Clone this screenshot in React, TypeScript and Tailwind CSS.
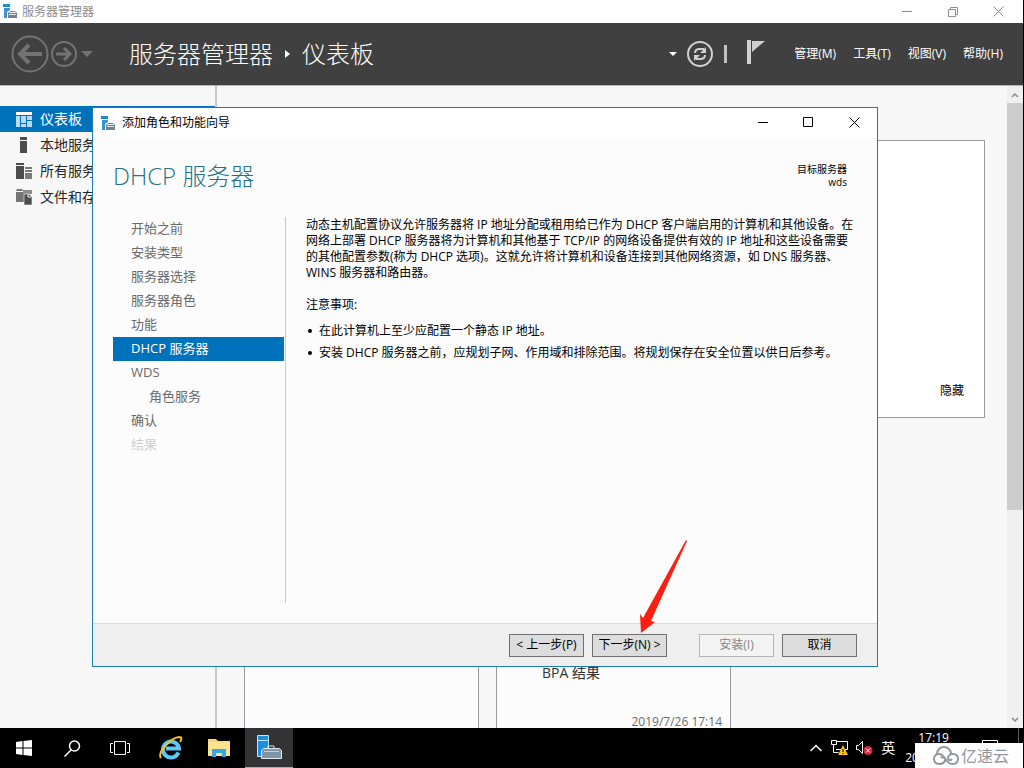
import type { ReactNode } from 'react';

const navItems = ['仪表板', '本地服务器', '所有服务器', '文件和存储服务'];

interface Step {
  label: string;
  nested?: boolean;
  disabled?: boolean;
}

const steps: Step[] = [
  { label: '开始之前' },
  { label: '安装类型' },
  { label: '服务器选择' },
  { label: '服务器角色' },
  { label: '功能' },
  { label: 'DHCP 服务器' },
  { label: 'WDS' },
  { label: '角色服务', nested: true },
  { label: '确认' },
  { label: '结果', disabled: true },
];

const notes = [
  '在此计算机上至少应配置一个静态 IP 地址。',
  '安装 DHCP 服务器之前，应规划子网、作用域和排除范围。将规划保存在安全位置以供日后参考。',
];

const menus = ['管理(M)', '工具(T)', '视图(V)', '帮助(H)'];

const ServerIcon = () => (
  <svg width="15" height="15" viewBox="0 0 15 15" className="shrink-0">
    <path d="M0 0h7v3H0z" fill="#1e88d2" />
    <path d="M1 4h6v2L4 8v6H1z" fill="#3a94d3" />
    <path d="M5 9h9v5H5z" fill="#6f8391" />
    <path d="M5 9.500L7 7.500h5l2 2" fill="none" stroke="#6f8391" />
    <path d="M6 10.500h7" stroke="#dfe7ec" />
  </svg>
);

const NavIcon = ({ index }: { index: number }) => {
  if (index === 0) {
    return (
      <svg width="16" height="15" viewBox="0 0 16 15">
        <path d="M0 0h16v3H0z" fill="#fff" />
        <path d="M0 4h4v11H0zM5 4h5v7H5zM11 4h5v4h-5zM5 12h5v3H5zM11 9h5v6h-5z" fill="#b9dcf2" />
      </svg>
    );
  }
  if (index === 1) {
    return (
      <svg width="16" height="16" viewBox="0 0 16 16" fill="#4d4d4d">
        <path d="M4 0h7v3H4zM4 4h7v12H4z" />
      </svg>
    );
  }
  if (index === 2) {
    return (
      <svg width="16" height="16" viewBox="0 0 16 16">
        <path d="M0 0h8v2H0zM0 3h8v13H0z" fill="#4d4d4d" />
        <path d="M9 4h7v2H9zM9 7h7v2H9zM9 10h7v6H9z" fill="#7a7a7a" />
      </svg>
    );
  }
  return (
    <svg width="16" height="16" viewBox="0 0 16 16">
      <path d="M1 0h5l1 2h-7zM0 3h8v10H0z" fill="#757575" />
      <path d="M7 1h9v4H7z" fill="#8b8b8b" />
      <path d="M8 5h5l3 3v8H8z" fill="#4d4d4d" stroke="#f7f7f7" strokeWidth=".6" />
      <path d="M12 5v3h3" fill="none" stroke="#f7f7f7" />
    </svg>
  );
};

const WindowButtons = ({ restore = false }: { restore?: boolean }) => (
  <div className="flex items-center gap-[34px]">
    <button aria-label="最小化">
      <svg width="12" height="12" fill="none" stroke="currentColor">
        <path d="M1 5.500h10" />
      </svg>
    </button>
    <button aria-label={restore ? '还原' : '最大化'}>
      <svg width="12" height="12" fill="none" stroke="currentColor">
        {restore ? <path d="M1.500 3.500h7v7h-7zM3.500 3.500v-2h7v7h-2" /> : <path d="M.5.5h9v9h-9z" />}
      </svg>
    </button>
    <button aria-label="关闭">
      <svg width="12" height="12" fill="none" stroke="currentColor">
        <path d="M.5.5l10 10M10.500.5l-10 10" />
      </svg>
    </button>
  </div>
);

const Header = () => (
  <header className="flex h-[62px] shrink-0 items-center bg-[#404040] pr-5 pl-[11px] text-white">
    <button aria-label="后退" className="text-[#737373]">
      <svg width="38" height="38" viewBox="0 0 38 38" fill="none" stroke="currentColor">
        <circle cx="19" cy="19" r="17.500" strokeWidth="2" />
        <path d="M31 19H10M18 10l-9 9 9 9" strokeWidth="4" />
      </svg>
    </button>
    <button aria-label="前进" className="ml-0.5 text-[#737373]">
      <svg width="26" height="26" viewBox="0 0 26 26" fill="none" stroke="currentColor">
        <circle cx="13" cy="13" r="12" strokeWidth="2" />
        <path d="M5 13h14M13 7l6 6-6 6" strokeWidth="3" />
      </svg>
    </button>
    <button aria-label="历史记录" className="ml-1 text-[#737373]">
      <svg width="12" height="6" fill="currentColor">
        <path d="M0 0h12L6 6z" />
      </svg>
    </button>
    <h1 className="ml-9 flex items-center text-2xl font-light">
      <span>服务器管理器</span>
      <svg width="5" height="8" fill="currentColor" className="mx-3">
        <path d="M0 0v8l5-4z" />
      </svg>
      <span>仪表板</span>
    </h1>
    <div className="ml-auto flex items-center">
      <button aria-label="更多">
        <svg width="8" height="4" fill="currentColor">
          <path d="M0 0h8L4 4z" />
        </svg>
      </button>
      <button aria-label="刷新" className="ml-2.5 text-[#d0d0d0]">
        <svg width="26" height="26" viewBox="0 0 26 26" fill="none" stroke="currentColor" strokeWidth="2">
          <circle cx="13" cy="13" r="12" />
          <path d="M8 12c0-3 2-4 5-4h4M18 14c0 3-2 4-5 4H9" />
          <path d="M19 6v6h-6zM7 20v-6h6z" fill="currentColor" stroke="none" />
        </svg>
      </button>
      <span className="ml-[11px] h-[18px] w-[3px] bg-[#c0c0c0]" />
      <button aria-label="通知" className="ml-5 text-[#d0d0d0]">
        <svg width="18" height="28" fill="currentColor">
          <path d="M0 0h4v24H0zM5 1h13L5 12z" />
        </svg>
      </button>
      <nav className="ml-[29px] flex gap-[17px] text-xs">
        {menus.map((menu) => (
          <button key={menu}>{menu}</button>
        ))}
      </nav>
    </div>
  </header>
);

const Dashboard = () => (
  <div className="flex min-h-0 flex-1 border-t border-[#b5b5b5] bg-[#f7f7f7]">
    <nav className="w-[217px] shrink-0 border-r-2 border-[#c8c8c8] pt-5">
      {navItems.map((item, index) => (
        <button
          key={item}
          className={`flex h-[26px] w-full items-center gap-2 pl-4 text-sm ${
            index === 0 ? 'bg-[#0072bc] text-white' : 'text-[#262626]'
          }`}
        >
          <NavIcon index={index} />
          {item}
        </button>
      ))}
    </nav>
    <main className="flex flex-1 flex-col pt-[54px] pr-[22px] pl-[27px]">
      <section className="flex h-[278px] shrink-0 items-end justify-end border border-[#999] bg-white px-5 pb-[18px]">
        <button className="text-xs">隐藏</button>
      </section>
      <div className="mt-10 flex flex-1 gap-[17px]">
        <section className="w-[235px] border border-b-0 border-[#999] bg-[#fcfcfc]" />
        <section className="flex w-[235px] flex-col justify-end border border-b-0 border-[#999] bg-[#fcfcfc] text-[#333]">
          <h2 className="mb-[33px] pl-[45px] text-sm">BPA 结果</h2>
          <time className="pr-2 text-right text-xs leading-3 text-[#6b6b6b]">2019/7/26 17:14</time>
        </section>
      </div>
    </main>
    <div className="flex w-4 shrink-0 flex-col bg-[#f0f0f0] text-[#8a8a8a]">
      <button aria-label="向上滚动" className="flex h-[17px] items-center justify-center">
        <svg width="8" height="6" fill="none" stroke="currentColor" strokeWidth="1.500">
          <path d="M1 5l3-3 3 3" />
        </svg>
      </button>
      <div className="flex-1">
        <div className="h-[67%] bg-[#cdcdcd]" />
      </div>
      <button aria-label="向下滚动" className="flex h-[17px] items-center justify-center">
        <svg width="8" height="6" fill="none" stroke="currentColor" strokeWidth="1.500">
          <path d="M1 1l3 3 3-3" />
        </svg>
      </button>
    </div>
  </div>
);

interface WizardButtonProps {
  children: ReactNode;
  disabled?: boolean;
}

const WizardButton = ({ children, disabled = false }: WizardButtonProps) => (
  <button
    disabled={disabled}
    className={`h-[23px] w-[75px] border text-xs whitespace-nowrap ${
      disabled ? 'border-[#b5b5b5] bg-[#f3f3f3] text-[#858585]' : 'border-[#707070] bg-[#dddddd] text-black'
    }`}
  >
    {children}
  </button>
);

const Wizard = () => (
  <div
    role="dialog"
    aria-labelledby="wizard-title"
    className="absolute top-[107px] right-[145px] bottom-[101px] left-[92px] flex flex-col border border-[#1a7bb9] bg-[#fcfcfc] text-black"
  >
    <div className="flex h-[30px] shrink-0 items-center bg-white pr-4 pl-2">
      <ServerIcon />
      <span id="wizard-title" className="ml-1.5 text-xs">
        添加角色和功能向导
      </span>
      <div className="ml-auto">
        <WindowButtons />
      </div>
    </div>
    <div className="flex h-[79px] shrink-0 items-center justify-between pr-[30px] pb-1 pl-5">
      <h2 className="text-2xl font-light text-[#22738a]">DHCP 服务器</h2>
      <div className="text-right text-[10px] leading-[13px]">
        <p>目标服务器</p>
        <p>wds</p>
      </div>
    </div>
    <div className="flex min-h-0 flex-1 pb-5 pl-5">
      <ol className="w-[173px] shrink-0 border-r border-[#c8c8c8] pr-px">
        {steps.map((step) => (
          <li key={step.label} className="flex h-6">
            <button
              disabled={step.disabled}
              className={`w-full text-left text-[13px] ${step.nested ? 'pl-9' : 'pl-[18px]'} ${
                step.label === 'DHCP 服务器'
                  ? 'bg-[#0072bc] text-white'
                  : step.disabled
                    ? 'text-[#cfcfcf]'
                    : 'text-[#6a6a6a]'
              }`}
            >
              {step.label}
            </button>
          </li>
        ))}
      </ol>
      <div className="flex-1 pr-4 pl-5 text-xs leading-4">
        <p>
          动态主机配置协议允许服务器将 IP 地址分配或租用给已作为 DHCP 客户端启用的计算机和其他设备。在
          <br />
          网络上部署 DHCP 服务器将为计算机和其他基于 TCP/IP 的网络设备提供有效的 IP 地址和这些设备需要
          <br />
          的其他配置参数(称为 DHCP 选项)。这就允许将计算机和设备连接到其他网络资源，如 DNS 服务器、
          <br />
          WINS 服务器和路由器。
        </p>
        <p className="mt-4">注意事项:</p>
        <ul className="mt-2.5 space-y-1.5">
          {notes.map((note) => (
            <li key={note} className="flex items-center gap-[7px] pl-0.5">
              <span className="size-1 shrink-0 rounded-full bg-black" />
              {note}
            </li>
          ))}
        </ul>
      </div>
    </div>
    <div className="flex h-[43px] shrink-0 items-center justify-end gap-2 border-t border-[#d9d9d9] bg-[#efefef] pr-5">
      <WizardButton>&lt; 上一步(P)</WizardButton>
      <div className="relative mr-6 flex">
        <WizardButton>下一步(N) &gt;</WizardButton>
        <svg
          width="48"
          height="94"
          viewBox="0 0 48 94"
          className="pointer-events-none absolute bottom-full left-12"
        >
          <path d="M46 0l1 1L11 81l4 1L1 93 0 74l3 4z" fill="#fb2013" />
        </svg>
      </div>
      <WizardButton disabled>安装(I)</WizardButton>
      <WizardButton>取消</WizardButton>
    </div>
  </div>
);

const Taskbar = () => (
  <footer className="flex h-10 shrink-0 items-stretch bg-black text-white">
    <button aria-label="开始" className="flex w-12 items-center justify-center">
      <svg width="16" height="16" viewBox="0 0 16 16" fill="currentColor">
        <path d="M0 2l6.500-1v6.500H0zM7.500 1L16 0v7.500H7.500zM0 8.500h6.500V15L0 14zM7.500 8.500H16V16l-8.500-1z" />
      </svg>
    </button>
    <button aria-label="搜索" className="flex w-12 items-center justify-center">
      <svg width="17" height="17" viewBox="0 0 17 17" fill="none" stroke="currentColor" strokeWidth="1.500">
        <circle cx="10.500" cy="6" r="5" />
        <path d="M7 10l-6.500 6.500" />
      </svg>
    </button>
    <button aria-label="任务视图" className="flex w-12 items-center justify-center">
      <svg width="20" height="14" viewBox="0 0 20 14" fill="none" stroke="currentColor">
        <path d="M4.500.5h11v13h-11zM3 2.500H.5v9H3M17 2.500h2.500v9H17" />
      </svg>
    </button>
    <button aria-label="Internet Explorer" className="ml-[3px] flex w-12 items-center justify-center">
      <svg width="24" height="24" viewBox="0 0 24 24" fill="none">
        <path d="M19.500 16.500A8 8 0 1 1 20 12.500H7" stroke="#5bc8f5" strokeWidth="4" />
        <path d="M2 22C-2 17 11 2 20 1c3 0 3 2 1 5" stroke="#f5bf22" strokeWidth="2" />
      </svg>
    </button>
    <button aria-label="文件资源管理器" className="flex w-12 items-center justify-center">
      <svg width="22" height="18" viewBox="0 0 22 18">
        <path d="M0 0h8l2 2h12v15H0z" fill="#f6d77a" />
        <path d="M0 3h22v14H0z" fill="#fbe391" />
        <path d="M4 18v-8h14v8h-4v-4H8v4z" fill="#3ba7de" />
      </svg>
    </button>
    <button
      aria-label="服务器管理器"
      className="ml-0.5 flex w-12 items-center justify-center border-b border-[#76b9ed] bg-[#333335]"
    >
      <svg width="25" height="25" viewBox="0 0 25 25">
        <path d="M.5.5h11v21H.5z" fill="#1e8fe0" stroke="#bfe2fa" />
        <path d="M0 5.500h12" stroke="#bfe2fa" />
        <path d="M11 13v-2h6v2" fill="none" stroke="#dce5eb" />
        <path d="M6.500 13.500h16l2 2v8h-20v-8z" fill="#7e96a5" stroke="#e3ebf0" />
        <path d="M7 16.500h15" stroke="#c2ced6" />
      </svg>
    </button>
    <div className="ml-auto flex items-center">
      <button aria-label="显示隐藏的图标">
        <svg width="12" height="8" fill="none" stroke="currentColor" strokeWidth="1.500">
          <path d="M.5 7L6 1.500 11.500 7" />
        </svg>
      </button>
      <button aria-label="网络" className="ml-[9px]">
        <svg width="18" height="16" viewBox="0 0 18 16" fill="none" stroke="currentColor">
          <path d="M5 1.500h11.500v8H5M.5.5h5v4h-5zM2.500 4.500v8h5" />
          <path d="M12 5l5 10H7z" fill="#fdc116" stroke="none" />
          <path d="M12 9v3M12 13v1" stroke="#000" />
        </svg>
      </button>
      <button aria-label="音量" className="ml-[7px]">
        <svg width="18" height="16" viewBox="0 0 18 16" fill="none" stroke="currentColor">
          <path d="M.5 5.500h2l4-4v12l-4-4h-2z" />
          <circle cx="12" cy="10.500" r="4.500" fill="#d6273c" stroke="none" />
          <path d="M10 8.500l4 4M14 8.500l-4 4" />
        </svg>
      </button>
      <button className="ml-[7px] text-sm">英</button>
      <button className="ml-2.5 flex flex-col items-center gap-1 text-xs leading-4">
        <span>17:19</span>
        <span>2019/7/26</span>
      </button>
      <button aria-label="操作中心" className="ml-5">
        <svg width="16" height="16" viewBox="0 0 16 16" fill="none" stroke="currentColor">
          <path d="M.5.5h15v11H11l-3 3v-3H.5z" />
        </svg>
      </button>
      <span className="mr-1 ml-5 h-full w-px bg-[#5a5a5a]" />
    </div>
  </footer>
);

const App = () => {
  return (
    <div className="relative flex h-screen flex-col overflow-hidden border-r border-black bg-white font-['Open_Sans','Noto_Sans_CJK_SC',sans-serif]">
      <div className="flex h-[23px] shrink-0 items-center pr-[18px] pl-[3px] text-[#8c8c8c]">
        <ServerIcon />
        <span className="ml-1 text-xs">服务器管理器</span>
        <div className="ml-auto">
          <WindowButtons restore />
        </div>
      </div>
      <Header />
      <Dashboard />
      <Taskbar />
      <Wizard />
      <div className="absolute right-0 bottom-0 flex h-[25px] w-[108px] items-center gap-0.5 bg-white pl-[18px] text-[#9297a0]">
        <svg width="26" height="20" viewBox="0 0 26 20" fill="none" stroke="currentColor" strokeWidth="2">
          <path d="M4 8c0-4 3-7 7-7s7 3 7 7" />
          <path d="M8 12c2-2 5 0 4 3-1 2-3 3-5 3-4 0-6-2-6-5s2-5 5-5c6 0 7 10 13 10 4 0 6-2 6-5s-2-5-5-5c-3 0-5 2-5 4s3 3 4 1" />
        </svg>
        <span className="text-base">亿速云</span>
      </div>
    </div>
  );
};

export default App;
